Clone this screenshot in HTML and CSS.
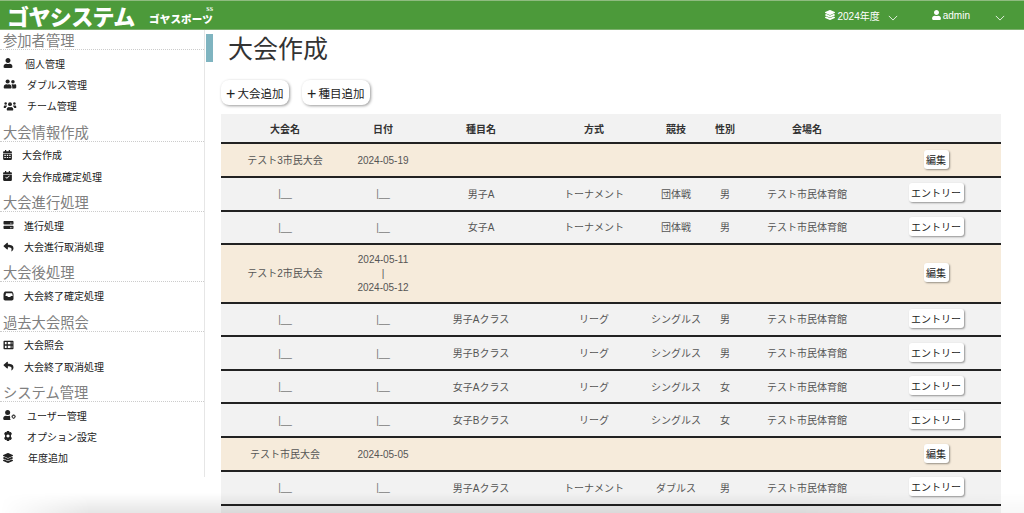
FILE: index.html
```html
<!DOCTYPE html>
<html lang="ja">
<head>
<meta charset="utf-8">
<title>大会作成</title>
<link rel="stylesheet" href="styles.css">
</head>
<body>
<svg class="defs" width="0" height="0" aria-hidden="true">
  <symbol id="i-user" viewBox="0 0 448 512"><path d="M224 256c70.7 0 128-57.3 128-128S294.7 0 224 0 96 57.3 96 128s57.3 128 128 128zm89.6 32h-16.7c-22.2 10.2-46.9 16-72.9 16s-50.6-5.8-72.9-16h-16.7C60.2 288 0 348.2 0 422.4V464c0 26.5 21.5 48 48 48h352c26.5 0 48-21.5 48-48v-41.6c0-74.2-60.2-134.4-134.4-134.4z"/></symbol>
  <symbol id="i-friends" viewBox="0 0 640 512"><circle cx="200" cy="130" r="105"/><circle cx="470" cy="140" r="90"/><path d="M40 480c-22 0-40-14-40-36v-40c0-80 60-130 130-130h20c16 8 32 12 50 12s34-4 50-12h20c70 0 130 50 130 130v40c0 22-18 36-40 36z"/><path d="M430 480c4-10 6-22 6-36v-40c0-44-14-82-38-112 18-12 40-18 62-18h14c14 6 30 10 46 10s30-4 44-10h14c34 0 62 28 62 62v84c0 34-20 60-50 60z"/></symbol>
  <symbol id="i-users" viewBox="0 0 640 512"><circle cx="320" cy="160" r="100"/><circle cx="96" cy="130" r="64"/><circle cx="544" cy="130" r="64"/><path d="M180 480c-14 0-26-12-26-28v-34c0-66 50-116 114-116h8c14 8 30 12 44 12s30-4 44-12h8c64 0 114 50 114 116v34c0 16-12 28-26 28z"/><path d="M0 300c0-36 28-64 64-64h64c18 0 34 8 46 18-40 22-68 62-74 110H32c-18 0-32-14-32-32zM640 300c0-36-28-64-64-64h-64c-18 0-34 8-46 18 40 22 68 62 74 110h68c18 0 32-14 32-32z"/></symbol>
  <symbol id="i-cal" viewBox="0 0 448 512"><path d="M0 192h448v272c0 26-22 48-48 48H48c-26 0-48-22-48-48zm64 56v56h72v-56zm124 0v56h72v-56zm124 0v56h72v-56zM64 356v56h72v-56zm124 0v56h72v-56zm124 0v56h72v-56z"/><path d="M48 64h48V20c0-11 9-20 20-20h24c11 0 20 9 20 20v44h128V20c0-11 9-20 20-20h24c11 0 20 9 20 20v44h48c26 0 48 22 48 48v48H0v-48c0-26 22-48 48-48z"/></symbol>
  <symbol id="i-calcheck" viewBox="0 0 448 512"><path fill-rule="evenodd" d="M0 192h448v272c0 26-22 48-48 48H48c-26 0-48-22-48-48zm339 65-27-27-119 118-57-57-27 27 84 85z"/><path d="M48 64h48V20c0-11 9-20 20-20h24c11 0 20 9 20 20v44h128V20c0-11 9-20 20-20h24c11 0 20 9 20 20v44h48c26 0 48 22 48 48v48H0v-48c0-26 22-48 48-48z"/></symbol>
  <symbol id="i-server" viewBox="0 0 512 512"><path fill-rule="evenodd" d="M36 48h440c20 0 36 16 36 36v104c0 20-16 36-36 36H36c-20 0-36-16-36-36V84c0-20 16-36 36-36zm300 88v40h40v-40zm72 0v40h40v-40zM36 288h440c20 0 36 16 36 36v104c0 20-16 36-36 36H36c-20 0-36-16-36-36V324c0-20 16-36 36-36zm300 88v40h40v-40zm72 0v40h40v-40z"/></symbol>
  <symbol id="i-reply" viewBox="0 0 512 512"><path d="M8.309 189.836L184.313 37.851C199.719 24.546 224 35.347 224 56.015v80.053c160.629 1.839 288 34.032 288 186.258 0 61.441-39.581 122.309-83.333 154.132-13.653 9.931-33.111-2.533-28.077-18.631 45.344-145.012-21.507-183.51-176.59-185.742V360c0 20.7-24.3 31.453-39.687 18.164l-176.004-152c-11.071-9.562-11.086-26.753 0-36.328z"/></symbol>
  <symbol id="i-inbox" viewBox="0 0 512 512"><path fill-rule="evenodd" d="M110 30h292c50 0 80 34 94 76l16 60v226c0 50-40 90-90 90H90c-50 0-90-40-90-90V166l16-60C30 64 60 30 110 30zm18 90-30 130h96l32 60h120l32-60h96l-30-130z"/></symbol>
  <symbol id="i-film" viewBox="0 0 512 512"><path fill-rule="evenodd" d="M40 36h432c22 0 40 18 40 40v360c0 22-18 40-40 40H40c-22 0-40-18-40-40V76c0-22 18-40 40-40zm30 70v110h90V106zm0 190v110h90V296zm150-190v110h140V106zm0 190v110h140V296zm200-190v110h30V106zm0 190v110h30V296z"/></symbol>
  <symbol id="i-usercog" viewBox="0 0 640 512"><circle cx="224" cy="128" r="128"/><path d="M48 512c-26 0-48-22-48-48v-42c0-74 60-134 134-134h17c22 10 47 16 73 16s51-6 73-16h17c10 0 20 1 30 3-6 30 0 60 14 86-16 30-16 70 2 102 3 12 10 23 20 33z"/><path fill-rule="evenodd" d="M490 226h80l10 40 40 18 20 50-20 50-40 18-10 40h-80l-10-40-40-18-20-50 20-50 40-18zm40 68a44 44 0 1 0 .1 0z"/></symbol>
  <symbol id="i-cog" viewBox="0 0 512 512"><path fill-rule="evenodd" d="M200 0h112l20 70 70-16 56 96-50 54v104l50 54-56 96-70-16-20 70H200l-20-70-70 16-56-96 50-54V204l-50-54 56-96 70 16zm56 176a80 80 0 1 0 .1 0z"/></symbol>
  <symbol id="i-layers" viewBox="0 0 512 512"><path d="M12.41 148.02l232.94 105.67c6.8 3.09 14.49 3.09 21.29 0l232.94-105.67c16.55-7.51 16.55-32.52 0-40.03L266.65 2.31a25.607 25.607 0 0 0-21.29 0L12.41 107.98c-16.55 7.51-16.55 32.53 0 40.04zm487.18 88.28l-58.09-26.33-161.64 73.27c-7.56 3.43-15.59 5.17-23.86 5.17s-16.29-1.74-23.86-5.17L70.51 209.97l-58.1 26.33c-16.55 7.5-16.55 32.5 0 40l232.94 105.59c6.8 3.08 14.49 3.08 21.29 0L499.59 276.3c16.55-7.5 16.55-32.5 0-40zm0 127.8l-57.87-26.23-161.86 73.37c-7.56 3.43-15.59 5.17-23.86 5.17s-16.29-1.74-23.86-5.17L70.29 337.87 12.41 364.1c-16.55 7.5-16.55 32.5 0 40l232.94 105.59c6.8 3.08 14.49 3.08 21.29 0L499.59 404.1c16.55-7.5 16.55-32.5 0-40z"/></symbol>
  <symbol id="i-chev" viewBox="0 0 12 7"><path d="M1 1l5 5 5-5" fill="none" stroke="currentColor" stroke-width="1"/></symbol>
</svg>

<header class="topbar">
  <div class="brand">
    <span class="brand-main">ゴヤシステム</span>
    <span class="brand-sub"><span class="brand-ss">SS</span>ゴヤスポーツ</span>
  </div>
  <div class="top-menu">
    <span class="top-item top-year"><svg class="top-icon"><use href="#i-layers"/></svg>2024年度</span>
    <svg class="chev chev-year"><use href="#i-chev"/></svg>
    <span class="top-item top-user"><svg class="top-icon top-icon-user"><use href="#i-user"/></svg>admin</span>
    <svg class="chev chev-user"><use href="#i-chev"/></svg>
  </div>
</header>

<div class="layout">
  <nav class="sidebar">
    <section class="group">
      <h2 class="group-title">参加者管理</h2>
      <a class="item"><svg class="ic w-10"><use href="#i-user"/></svg><span class="lab l25">個人管理</span></a>
      <a class="item"><svg class="ic w-14"><use href="#i-friends"/></svg><span class="lab l27">ダブルス管理</span></a>
      <a class="item"><svg class="ic w-14"><use href="#i-users"/></svg><span class="lab l27">チーム管理</span></a>
    </section>
    <section class="group">
      <h2 class="group-title">大会情報作成</h2>
      <a class="item"><svg class="ic w-9"><use href="#i-cal"/></svg><span class="lab l22">大会作成</span></a>
      <a class="item"><svg class="ic w-9"><use href="#i-calcheck"/></svg><span class="lab l22">大会作成確定処理</span></a>
    </section>
    <section class="group">
      <h2 class="group-title">大会進行処理</h2>
      <a class="item"><svg class="ic w-11"><use href="#i-server"/></svg><span class="lab l24">進行処理</span></a>
      <a class="item"><svg class="ic w-11"><use href="#i-reply"/></svg><span class="lab l24">大会進行取消処理</span></a>
    </section>
    <section class="group">
      <h2 class="group-title">大会後処理</h2>
      <a class="item"><svg class="ic w-11"><use href="#i-inbox"/></svg><span class="lab l24">大会終了確定処理</span></a>
    </section>
    <section class="group">
      <h2 class="group-title">過去大会照会</h2>
      <a class="item"><svg class="ic w-11"><use href="#i-film"/></svg><span class="lab l24">大会照会</span></a>
      <a class="item"><svg class="ic w-11"><use href="#i-reply"/></svg><span class="lab l24">大会終了取消処理</span></a>
    </section>
    <section class="group">
      <h2 class="group-title">システム管理</h2>
      <a class="item"><svg class="ic w-13"><use href="#i-usercog"/></svg><span class="lab l27">ユーザー管理</span></a>
      <a class="item"><svg class="ic w-10"><use href="#i-cog"/></svg><span class="lab l27">オプション設定</span></a>
      <a class="item"><svg class="ic w-10"><use href="#i-layers"/></svg><span class="lab l28">年度追加</span></a>
    </section>
  </nav>

  <main class="main">
    <h1 class="page-title">大会作成</h1>
    <div class="actions">
      <button class="add-btn"><span class="plus">+</span>大会追加</button>
      <button class="add-btn"><span class="plus">+</span>種目追加</button>
    </div>
    <table class="grid">
      <colgroup>
        <col class="c1"><col class="c2"><col class="c3"><col class="c4"><col class="c5"><col class="c6"><col class="c7"><col class="c8">
      </colgroup>
      <thead>
        <tr><th>大会名</th><th>日付</th><th>種目名</th><th>方式</th><th>競技</th><th>性別</th><th>会場名</th><th></th></tr>
      </thead>
      <tbody>
        <tr class="event"><td>テスト3市民大会</td><td>2024-05-19</td><td></td><td></td><td></td><td></td><td></td><td class="act"><button class="row-btn">編集</button></td></tr>
        <tr class="sub"><td class="tick">|__</td><td class="tick">|__</td><td>男子A</td><td>トーナメント</td><td>団体戦</td><td>男</td><td>テスト市民体育館</td><td class="act"><button class="row-btn">エントリー</button></td></tr>
        <tr class="sub"><td class="tick">|__</td><td class="tick">|__</td><td>女子A</td><td>トーナメント</td><td>団体戦</td><td>男</td><td>テスト市民体育館</td><td class="act"><button class="row-btn">エントリー</button></td></tr>
        <tr class="event tall"><td>テスト2市民大会</td><td>2024-05-11<br>|<br>2024-05-12</td><td></td><td></td><td></td><td></td><td></td><td class="act"><button class="row-btn">編集</button></td></tr>
        <tr class="sub"><td class="tick">|__</td><td class="tick">|__</td><td>男子Aクラス</td><td>リーグ</td><td>シングルス</td><td>男</td><td>テスト市民体育館</td><td class="act"><button class="row-btn">エントリー</button></td></tr>
        <tr class="sub"><td class="tick">|__</td><td class="tick">|__</td><td>男子Bクラス</td><td>リーグ</td><td>シングルス</td><td>男</td><td>テスト市民体育館</td><td class="act"><button class="row-btn">エントリー</button></td></tr>
        <tr class="sub"><td class="tick">|__</td><td class="tick">|__</td><td>女子Aクラス</td><td>リーグ</td><td>シングルス</td><td>女</td><td>テスト市民体育館</td><td class="act"><button class="row-btn">エントリー</button></td></tr>
        <tr class="sub"><td class="tick">|__</td><td class="tick">|__</td><td>女子Bクラス</td><td>リーグ</td><td>シングルス</td><td>女</td><td>テスト市民体育館</td><td class="act"><button class="row-btn">エントリー</button></td></tr>
        <tr class="event"><td>テスト市民大会</td><td>2024-05-05</td><td></td><td></td><td></td><td></td><td></td><td class="act"><button class="row-btn">編集</button></td></tr>
        <tr class="sub"><td class="tick">|__</td><td class="tick">|__</td><td>男子Aクラス</td><td>トーナメント</td><td>ダブルス</td><td>男</td><td>テスト市民体育館</td><td class="act"><button class="row-btn">エントリー</button></td></tr>
        <tr class="sub"><td></td><td></td><td></td><td></td><td></td><td></td><td></td><td></td></tr>
      </tbody>
    </table>
  </main>
</div>
<div class="bottom-fade"></div>
</body>
</html>
```
FILE: styles.css
```css
* { box-sizing: border-box; }
html, body { margin: 0; height: 513px; overflow: hidden; background: #fff; }
body { font-family: "Liberation Sans", "Noto Sans CJK JP", sans-serif; color: #333; font-size: 10px; position: relative; }
.defs { position: absolute; }

.topbar {
  height: 30px; background: #4c9a3a; border-top: 1px solid #8fbb80; border-bottom: 1px solid #7eb06f;
  display: flex; align-items: center; justify-content: space-between; color: #fff;
}
.brand { display: flex; align-items: center; padding-left: 7px; position: relative; }
.brand-main { font-family: "Noto Sans CJK JP", sans-serif; font-weight: 900; font-size: 22px; line-height: 26px; letter-spacing: -0.6px; width: 142px; white-space: nowrap; }
.brand-sub { font-family: "Noto Sans CJK JP", sans-serif; font-weight: 900; font-size: 10.5px; line-height: 11px; margin-top: 6px; white-space: nowrap; position: relative; letter-spacing: 0.2px; }
.brand-ss { position: absolute; right: 0; top: -7px; font-size: 6px; line-height: 7px; font-family: "Liberation Serif", serif; font-weight: 700; letter-spacing: 0; }
.top-menu { display: flex; align-items: center; height: 100%; }
.top-item { display: flex; align-items: center; font-size: 10px; }
.top-year { margin-right: 8px; }
.top-user { margin-left: 34px; margin-right: 25px; }
.top-icon { width: 10px; height: 10px; fill: #fff; margin-right: 3px; }
.top-icon-user { width: 9px; margin-right: 2px; }
.chev { width: 10px; height: 6px; color: #fff; margin-top: 5px; }
.chev-user { margin-right: 19px; }

.layout { display: flex; height: 483px; }
.sidebar { width: 205px; height: 447px; border-right: 1px solid #e6e6e6; padding-top: 1px; flex: none; }
.group { margin-bottom: 6.3px; }
.group-title { margin: 0 0 2.5px; font-size: 14.3px; font-weight: 400; line-height: 18px; height: 19px; color: #808080; padding-left: 3px; border-bottom: 1px dotted #ccc; font-family: "Noto Sans CJK JP", sans-serif; white-space: nowrap; }
.item { display: flex; align-items: center; height: 21.3px; padding-left: 3px; color: #222; font-size: 10px; position: relative; }
.ic { height: 10px; fill: #222; flex: none; }
.w-9 { width: 9px; } .w-10 { width: 10px; } .w-11 { width: 11px; } .w-13 { width: 13px; } .w-14 { width: 14px; }
.lab { white-space: nowrap; }
.w-10 + .l25 { margin-left: 12px; }
.w-14 + .l27 { margin-left: 10px; }
.w-9 + .l22 { margin-left: 10px; }
.w-11 + .l24 { margin-left: 10px; }
.w-13 + .l27 { margin-left: 11px; }
.w-10 + .l27 { margin-left: 14px; }
.w-10 + .l28 { margin-left: 15px; }

.main { flex: 1; min-width: 0; padding: 0 23px 0 16px; overflow: hidden; }
.page-title { margin: 4px 0 0 -15px; height: 28px; border-left: 7px solid #7fb4c0; padding-left: 15px; font-size: 25px; font-weight: 400; line-height: 26px; color: #333; font-family: "Noto Sans CJK JP", sans-serif; }
.actions { display: flex; gap: 13.5px; margin-top: 19px; height: 33px; }
.add-btn { width: 67.5px; height: 25px; padding: 0; border: 0; background: #fff; border-radius: 8px; box-shadow: 1px 1px 3px rgba(0,0,0,.4); font-family: inherit; font-size: 11.5px; color: #222; white-space: nowrap; position: relative; top: -1px; }
.plus { font-size: 16px; line-height: 12px; margin-right: 2px; vertical-align: -1px; }

.grid { width: 780px; table-layout: fixed; border-collapse: collapse; text-align: center; }
.c1 { width: 128px; } .c2 { width: 68px; } .c3 { width: 128px; } .c4 { width: 98px; }
.c5 { width: 66px; } .c6 { width: 32px; } .c7 { width: 132px; } .c8 { width: 128px; }
.grid th { height: 29px; background: #f2f2f2; font-size: 10px; font-weight: 700; color: #333; padding: 0; border-bottom: 2px solid #222; }
.grid td { padding: 2px 0 0; font-size: 10px; line-height: 14px; color: #555; border-bottom: 2px solid #222; }
.grid td.tick { color: #777; padding-top: 1px; }
.grid td.act { padding: 0 2px 0 0; }
.event td { height: 34px; background: #f6ebdb; }
.event.tall td { height: 58.5px; }
.sub td { height: 33.6px; background: #f2f2f2; }
.row-btn { display: block; margin: 0 auto 2px; height: 19px; padding: 0 2.5px; border: 0; background: #fff; border-radius: 3px; box-shadow: 1px 1px 2px rgba(0,0,0,.4); font-family: inherit; font-size: 10px; color: #222; }

.bottom-fade { position: absolute; left: 0; right: 0; bottom: 0; height: 20px; background: linear-gradient(to bottom, rgba(0,0,0,0), rgba(0,0,0,.1)); -webkit-mask-image: linear-gradient(to right, transparent 0, #000 90px, #000 800px, rgba(0,0,0,.3) 1001px); mask-image: linear-gradient(to right, transparent 0, #000 90px, #000 800px, rgba(0,0,0,.3) 1001px); pointer-events: none; }
```
